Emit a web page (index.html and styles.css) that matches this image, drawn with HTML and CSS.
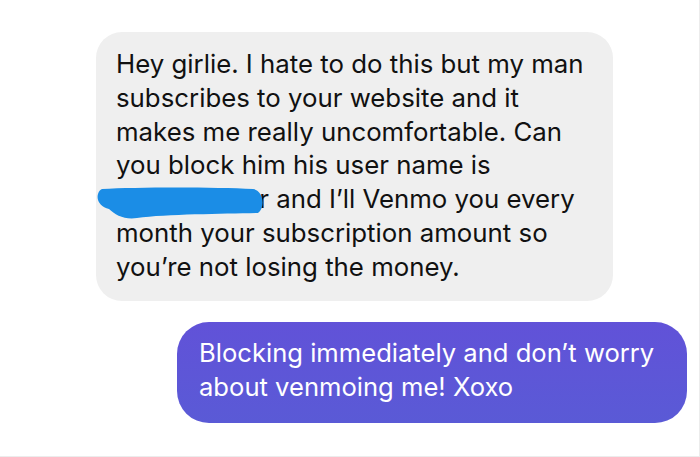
FILE: index.html
```html
<!DOCTYPE html>
<html>
<head>
<meta charset="utf-8">
<link rel="stylesheet" href="styles.css">
</head>
<body>
<div class="frame">
  <div class="thread">
    <div class="bubble received">
      Hey girlie. I hate to do this but my man<br>
      subscribes to your website and it<br>
      makes me really uncomfortable. Can<br>
      you block him his user name is<br>
      <span class="hidden-name"><span class="name-tail">r</span><svg class="scribble" viewBox="0 0 170 34" width="170" height="34"><path d="M5 2 C 40 0, 118 0, 156 2 C 166 3, 169 20, 161 26 C 128 27, 70 27, 40 31 C 28 33, 18 28, 12 22 C 4 20, -1 14, 1 7 C 2 4, 3 3, 5 2 Z" fill="#1b8de6"/></svg></span> and I’ll Venmo you every<br>
      month your subscription amount so<br>
      you’re not losing the money.
    </div>
    <div class="bubble sent">
      Blocking immediately and don’t worry<br>
      about venmoing me! Xoxo
    </div>
  </div>
</div>
</body>
</html>
```

FILE: styles.css
```css
html, body {
  margin: 0;
  padding: 0;
  background: #ffffff;
}

.frame {
  width: 699px;
  height: 456px;
  border-right: 1px solid #ececec;
  border-bottom: 1px solid #ececec;
  overflow: hidden;
}

.thread {
  display: flex;
  flex-direction: column;
  align-items: flex-start;
  gap: 21px;
  padding-top: 32px;
  font-family: Inter, "Noto Sans", sans-serif;
  font-size: 25.6px;
  line-height: 33.8px;
}

.bubble {
  box-sizing: border-box;
  padding: 15px 20px;
}

.received {
  margin-left: 96px;
  width: 517px;
  height: 269px;
  font-size: 25.8px;
  background: #efefef;
  color: #111111;
  border-radius: 26px;
}

.sent {
  margin-left: 177px;
  width: 510px;
  height: 101px;
  padding: 14px 22px;
  background: linear-gradient(180deg, #6152d8 0%, #5a5ad6 100%);
  color: #ffffff;
  border-radius: 32px;
}

.hidden-name {
  position: relative;
  display: inline-block;
  width: 153px;
  text-align: right;
}

.name-tail {
  display: inline-block;
}

.scribble {
  position: absolute;
  left: -19px;
  top: 5px;
}
```
